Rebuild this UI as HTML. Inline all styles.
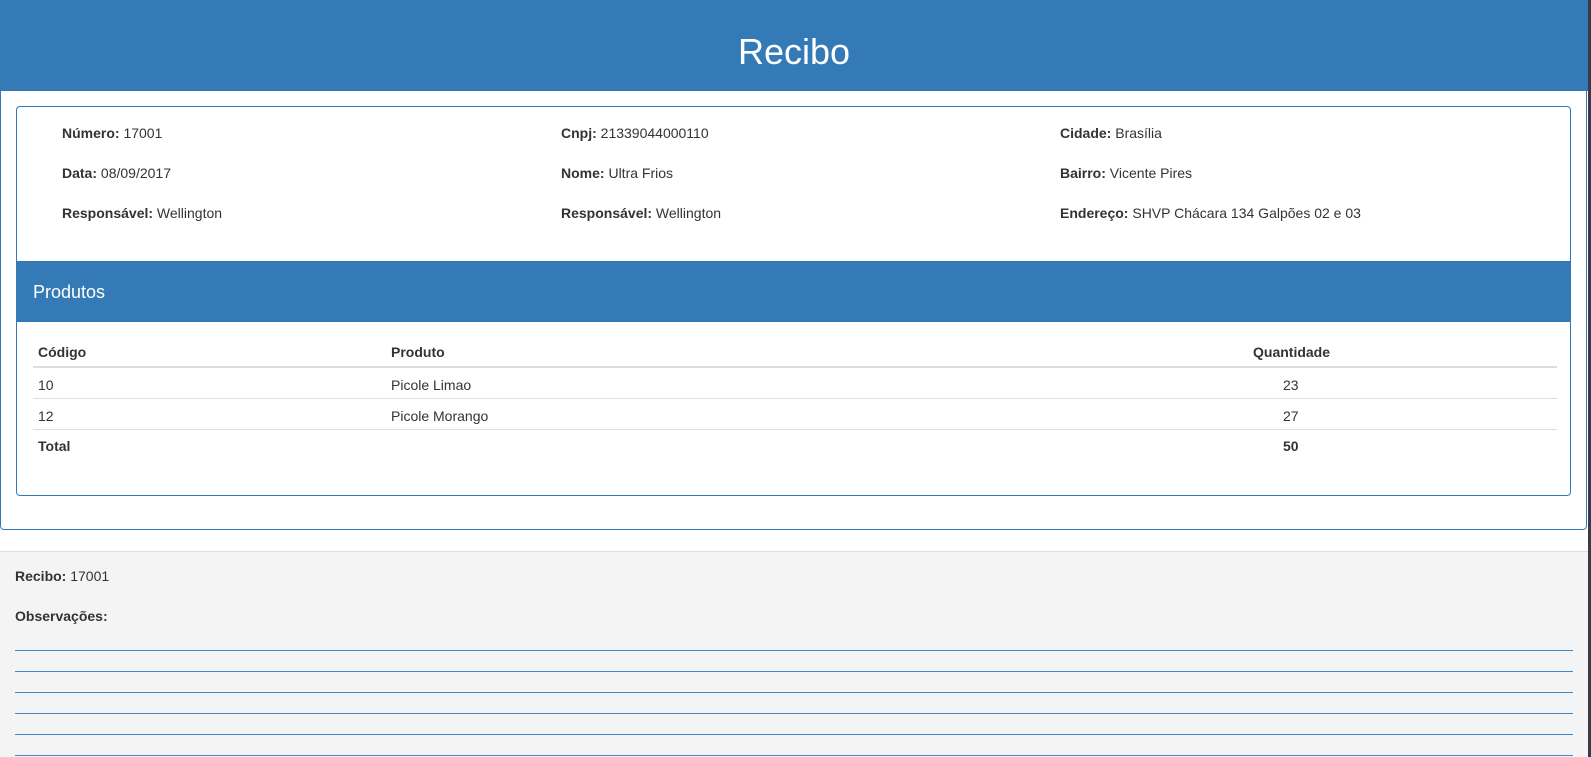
<!DOCTYPE html>
<html><head><meta charset="utf-8"><style>
body{margin:0;width:1591px;height:756px;overflow:hidden;background:#3a3a48;font-family:"Liberation Sans",sans-serif;font-size:14px;color:#333;position:relative}
.page{position:absolute;left:0;top:0;width:1588px;height:756px;background:#fff}
.outer{position:absolute;left:0;top:0;width:1585px;height:529px;border:1px solid #337ab7;border-top:none;border-radius:0 0 4px 4px}
.hdr{position:absolute;left:0;top:0;width:1588px;height:91px;background:#337ab7;color:#fff;font-size:36px;text-align:center;line-height:104px}
.inner{position:absolute;left:16px;top:106px;width:1553px;height:388px;border:1px solid #337ab7;border-radius:4px;overflow:hidden}
.t{position:absolute;white-space:nowrap}
b{font-weight:bold}
.ph{position:absolute;left:0;top:154px;width:100%;height:61px;background:#337ab7;color:#fff;font-size:18px;line-height:62px;padding-left:16px;box-sizing:border-box}
.hl{position:absolute;left:16px;width:1524px;background:#ddd}
.gray{position:absolute;left:0;top:551px;width:1588px;height:205px;background:#f4f4f4;border-top:1px solid #ddd}
.ln{position:absolute;left:15px;width:1558px;height:1px;background:#3f88cc}
</style></head><body><div class="page">
<div class="outer"></div>
<div class="hdr">Recibo</div>
<div class="inner">
<div class="t" style="left:45px;top:18px"><b>Número:</b> 17001</div>
<div class="t" style="left:45px;top:58px"><b>Data:</b> 08/09/2017</div>
<div class="t" style="left:45px;top:98px"><b>Responsável:</b> Wellington</div>
<div class="t" style="left:544px;top:18px"><b>Cnpj:</b> 21339044000110</div>
<div class="t" style="left:544px;top:58px"><b>Nome:</b> Ultra Frios</div>
<div class="t" style="left:544px;top:98px"><b>Responsável:</b> Wellington</div>
<div class="t" style="left:1043px;top:18px"><b>Cidade:</b> Brasília</div>
<div class="t" style="left:1043px;top:58px"><b>Bairro:</b> Vicente Pires</div>
<div class="t" style="left:1043px;top:98px"><b>Endereço:</b> SHVP Chácara 134 Galpões 02 e 03</div>
<div class="ph">Produtos</div>
<div class="t" style="left:21px;top:237px"><b>Código</b></div>
<div class="t" style="left:374px;top:237px"><b>Produto</b></div>
<div class="t" style="left:1236px;top:237px"><b>Quantidade</b></div>
<div class="hl" style="top:259px;height:2px"></div>
<div class="t" style="left:21px;top:270px">10</div>
<div class="t" style="left:374px;top:270px">Picole Limao</div>
<div class="t" style="left:1266px;top:270px">23</div>
<div class="hl" style="top:291px;height:1px"></div>
<div class="t" style="left:21px;top:301px">12</div>
<div class="t" style="left:374px;top:301px">Picole Morango</div>
<div class="t" style="left:1266px;top:301px">27</div>
<div class="hl" style="top:322px;height:1px"></div>
<div class="t" style="left:21px;top:331px"><b>Total</b></div>
<div class="t" style="left:1266px;top:331px"><b>50</b></div>
</div>
<div class="gray">
<div class="t" style="left:15px;top:16px"><b>Recibo:</b> 17001</div>
<div class="t" style="left:15px;top:56px"><b>Observações:</b></div>
<div class="ln" style="top:98px"></div>
<div class="ln" style="top:119px"></div>
<div class="ln" style="top:140px"></div>
<div class="ln" style="top:161px"></div>
<div class="ln" style="top:182px"></div>
<div class="ln" style="top:203px"></div>
</div>
</div></body></html>
